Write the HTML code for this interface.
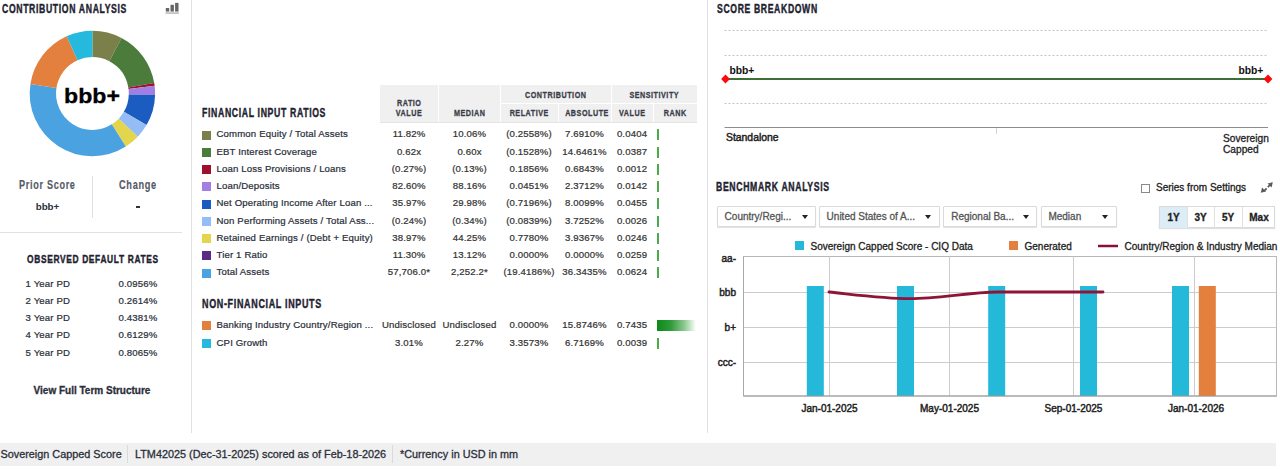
<!DOCTYPE html>
<html><head><meta charset="utf-8">
<style>
html,body{margin:0;padding:0;}
body{width:1280px;height:469px;overflow:hidden;position:relative;background:#fff;font-family:"Liberation Sans",sans-serif;color:#333;}
.t{position:absolute;white-space:nowrap;line-height:10px;font-size:10px;-webkit-text-stroke:0.3px currentColor;}
.hd{position:absolute;white-space:nowrap;font-weight:bold;font-size:12px;line-height:12px;color:#1e2230;transform-origin:0 0;-webkit-text-stroke:0.4px currentColor;}
.vl{position:absolute;width:1px;background:#dfe1e6;}
.sq{position:absolute;width:9px;height:9px;}
.nm{color:#2b2f3a;font-size:9.6px;letter-spacing:0.15px;-webkit-text-stroke:0.22px currentColor;}
.c{text-align:center;color:#333;font-size:9.6px;letter-spacing:0.15px;-webkit-text-stroke:0.22px currentColor;}
.rk{position:absolute;left:657.3px;width:1.4px;height:11px;background:#4caa4c;}
.bigbar{position:absolute;left:657px;width:39px;height:11px;background:linear-gradient(to right,#0a8a18 0%,#2f9a3a 35%,#8cc890 70%,#ffffff 100%);}
.th{position:absolute;background:#f0f0f0;}
.thx{position:absolute;white-space:nowrap;font-weight:bold;font-size:9.6px;line-height:10.6px;color:#3a3d48;text-align:center;letter-spacing:0.7px;text-indent:0.7px;-webkit-text-stroke:0.3px currentColor;transform:scaleX(0.75);transform-origin:50% 0;}
.pd{color:#2b2f3a;font-size:9.6px;letter-spacing:0.15px;-webkit-text-stroke:0.22px currentColor;}
.dd{position:absolute;top:206px;height:19px;border:1px solid #dadada;border-radius:1px;box-shadow:0 1px 1px rgba(0,0,0,0.12);background:#fff;}
.ddt{color:#555;font-size:10px;}
.arr{position:absolute;top:214.5px;width:0;height:0;border-left:3.5px solid transparent;border-right:3.5px solid transparent;border-top:4px solid #222;}
.bg{position:absolute;border:1px solid #dadada;box-shadow:0 1px 1px rgba(0,0,0,0.12);background:#fff;box-sizing:border-box;}
.btn{top:212.5px;text-align:center;font-weight:bold;color:#222;}
.yl{left:700px;width:36px;text-align:right;color:#222;-webkit-text-stroke:0.45px #222;}
.xl{top:403.5px;width:100px;text-align:center;font-size:10px;color:#222;-webkit-text-stroke:0.45px #222;}
.sb{top:448px;font-size:10.85px;line-height:12px;color:#2b2f3a;}
.pdv{color:#2b2f3a;width:56px;text-align:right;font-size:9.6px;letter-spacing:0.15px;-webkit-text-stroke:0.22px currentColor;}
</style></head><body>
<!-- dividers -->
<div class="vl" style="left:191px;top:0;height:433px"></div>
<div class="vl" style="left:706.5px;top:0;height:433px"></div>

<!-- LEFT PANEL -->
<div class="hd" style="left:2px;top:2.5px;letter-spacing:0.9px;transform:scaleX(0.721)">CONTRIBUTION ANALYSIS</div>
<svg style="position:absolute;left:165px;top:2px" width="15" height="13" viewBox="0 0 15 13">
<rect x="0.8" y="6" width="3.4" height="3.6" fill="#666"/><rect x="5.5" y="2.8" width="3.4" height="6.8" fill="#666"/><rect x="10.1" y="0.9" width="3.4" height="8.7" fill="#666"/><rect x="0.5" y="10.6" width="13.5" height="0.9" fill="#8a8a8a"/>
</svg>
<svg style="position:absolute;left:0;top:0" width="190" height="170">
<path d="M92.40 30.80A62.7 62.7 0 0 1 121.53 37.98L109.31 61.27A36.4 36.4 0 0 0 92.40 57.10Z" fill="#7b804a"/>
<path d="M121.53 37.98A62.7 62.7 0 0 1 154.22 83.06L128.29 87.44A36.4 36.4 0 0 0 109.31 61.27Z" fill="#4b7c3c"/>
<path d="M154.22 83.06A62.7 62.7 0 0 1 154.62 85.73L128.52 88.99A36.4 36.4 0 0 0 128.29 87.44Z" fill="#a0102a"/>
<path d="M154.62 85.73A62.7 62.7 0 0 1 155.08 95.05L128.79 94.40A36.4 36.4 0 0 0 128.52 88.99Z" fill="#a07ee4"/>
<path d="M155.08 95.05A62.7 62.7 0 0 1 146.56 125.09L123.84 111.84A36.4 36.4 0 0 0 128.79 94.40Z" fill="#1a5cbf"/>
<path d="M146.56 125.09A62.7 62.7 0 0 1 137.76 136.79L118.73 118.63A36.4 36.4 0 0 0 123.84 111.84Z" fill="#95bdf5"/>
<path d="M137.76 136.79A62.7 62.7 0 0 1 125.78 146.58L111.78 124.31A36.4 36.4 0 0 0 118.73 118.63Z" fill="#e3d54c"/>
<path d="M125.78 146.58A62.7 62.7 0 0 1 30.42 84.05L56.42 88.01A36.4 36.4 0 0 0 111.78 124.31Z" fill="#4aa3e0"/>
<path d="M30.42 84.05A62.7 62.7 0 0 1 66.72 36.30L77.49 60.29A36.4 36.4 0 0 0 56.42 88.01Z" fill="#e3803e"/>
<path d="M66.72 36.30A62.7 62.7 0 0 1 92.40 30.80L92.40 57.10A36.4 36.4 0 0 0 77.49 60.29Z" fill="#25b9de"/>
</svg>
<div class="t" style="left:42px;top:84.7px;width:100px;text-align:center;font-weight:bold;font-size:21px;line-height:22px;color:#000;transform:scaleX(1.1);-webkit-text-stroke:0.3px #000">bbb+</div>

<div class="hd" style="left:19px;top:178.5px;font-size:12px;color:#555a66;letter-spacing:0.9px;-webkit-text-stroke:0.15px currentColor;transform:scaleX(0.759)">Prior Score</div>
<div class="hd" style="left:119px;top:178.5px;font-size:12px;color:#555a66;letter-spacing:0.9px;-webkit-text-stroke:0.15px currentColor;transform:scaleX(0.767)">Change</div>
<div class="t" style="left:20px;width:55px;top:202px;text-align:center;font-weight:bold;font-size:9.8px;color:#2b2f3a;-webkit-text-stroke:0">bbb+</div>
<div style="position:absolute;left:136px;top:206.3px;width:4px;height:1.5px;background:#333"></div>
<div class="vl" style="left:92px;top:176px;height:42px"></div>
<div style="position:absolute;left:0;top:232px;width:182px;height:1px;background:#dfe1e6"></div>

<div class="hd" style="left:26.5px;top:253px;font-size:11.5px;letter-spacing:0.9px;transform:scaleX(0.729)">OBSERVED DEFAULT RATES</div>
<div class="t pd" style="left:25.5px;top:279.1px">1 Year PD</div><div class="t pdv" style="left:101.5px;top:279.1px">0.0956%</div>
<div class="t pd" style="left:25.5px;top:296.20000000000005px">2 Year PD</div><div class="t pdv" style="left:101.5px;top:296.20000000000005px">0.2614%</div>
<div class="t pd" style="left:25.5px;top:313.3px">3 Year PD</div><div class="t pdv" style="left:101.5px;top:313.3px">0.4381%</div>
<div class="t pd" style="left:25.5px;top:330.40000000000003px">4 Year PD</div><div class="t pdv" style="left:101.5px;top:330.40000000000003px">0.6129%</div>
<div class="t pd" style="left:25.5px;top:347.5px">5 Year PD</div><div class="t pdv" style="left:101.5px;top:347.5px">0.8065%</div>
<div class="t" style="left:0px;width:184px;top:386px;text-align:center;font-weight:bold;font-size:10px;color:#2b2f3a">View Full Term Structure</div>

<!-- MIDDLE PANEL -->
<div class="hd" style="left:202px;top:107px;letter-spacing:0.9px;transform:scaleX(0.724)">FINANCIAL INPUT RATIOS</div>
<div class="th" style="left:380px;top:85px;width:317px;height:37px"></div>
<div style="position:absolute;left:438px;top:85px;width:1px;height:37px;background:#fff"></div>
<div style="position:absolute;left:499.5px;top:85px;width:1px;height:37px;background:#fff"></div>
<div style="position:absolute;left:558px;top:103px;width:1px;height:19px;background:#fff"></div>
<div style="position:absolute;left:611px;top:85px;width:1px;height:37px;background:#fff"></div>
<div style="position:absolute;left:653px;top:103px;width:1px;height:19px;background:#fff"></div>
<div style="position:absolute;left:500px;top:103px;width:197px;height:1px;background:#fff"></div>
<div style="position:absolute;left:380px;top:122px;width:317px;height:1px;background:#e4e4e4"></div>
<div class="thx" style="left:380px;width:58px;top:97.5px">RATIO<br>VALUE</div>

<div class="thx" style="left:439px;width:61px;top:108.2px">MEDIAN</div>
<div class="thx" style="left:500px;width:111px;top:89.7px">CONTRIBUTION</div>
<div class="thx" style="left:611px;width:86px;top:89.7px">SENSITIVITY</div>
<div class="thx" style="left:500px;width:58px;top:108.2px">RELATIVE</div>
<div class="thx" style="left:558px;width:53px;top:108.2px">ABSOLUTE</div>
<div class="thx" style="left:611px;width:42px;top:108.2px">VALUE</div>
<div class="thx" style="left:653px;width:44px;top:108.2px">RANK</div>
<div class="sq" style="left:202px;top:130.6px;background:#7b804a"></div>
<div class="t nm" style="left:216.5px;top:129.4px">Common Equity / Total Assets</div>
<div class="t c" style="left:380px;width:58px;top:129.4px">11.82%</div>
<div class="t c" style="left:439px;width:61px;top:129.4px">10.06%</div>
<div class="t c" style="left:500px;width:58px;top:129.4px">(0.2558%)</div>
<div class="t c" style="left:558px;width:53px;top:129.4px">7.6910%</div>
<div class="t c" style="left:611px;width:42px;top:129.4px">0.0404</div>
<div class="rk" style="top:129.4px"></div>
<div class="sq" style="left:202px;top:147.84px;background:#4b7c3c"></div>
<div class="t nm" style="left:216.5px;top:146.64000000000001px">EBT Interest Coverage</div>
<div class="t c" style="left:380px;width:58px;top:146.64000000000001px">0.62x</div>
<div class="t c" style="left:439px;width:61px;top:146.64000000000001px">0.60x</div>
<div class="t c" style="left:500px;width:58px;top:146.64000000000001px">(0.1528%)</div>
<div class="t c" style="left:558px;width:53px;top:146.64000000000001px">14.6461%</div>
<div class="t c" style="left:611px;width:42px;top:146.64000000000001px">0.0387</div>
<div class="rk" style="top:146.64000000000001px"></div>
<div class="sq" style="left:202px;top:165.07999999999998px;background:#a0102a"></div>
<div class="t nm" style="left:216.5px;top:163.88px">Loan Loss Provisions / Loans</div>
<div class="t c" style="left:380px;width:58px;top:163.88px">(0.27%)</div>
<div class="t c" style="left:439px;width:61px;top:163.88px">(0.13%)</div>
<div class="t c" style="left:500px;width:58px;top:163.88px">0.1856%</div>
<div class="t c" style="left:558px;width:53px;top:163.88px">0.6843%</div>
<div class="t c" style="left:611px;width:42px;top:163.88px">0.0012</div>
<div class="rk" style="top:163.88px"></div>
<div class="sq" style="left:202px;top:182.32px;background:#a07ee4"></div>
<div class="t nm" style="left:216.5px;top:181.12px">Loan/Deposits</div>
<div class="t c" style="left:380px;width:58px;top:181.12px">82.60%</div>
<div class="t c" style="left:439px;width:61px;top:181.12px">88.16%</div>
<div class="t c" style="left:500px;width:58px;top:181.12px">0.0451%</div>
<div class="t c" style="left:558px;width:53px;top:181.12px">2.3712%</div>
<div class="t c" style="left:611px;width:42px;top:181.12px">0.0142</div>
<div class="rk" style="top:181.12px"></div>
<div class="sq" style="left:202px;top:199.56px;background:#1a5cbf"></div>
<div class="t nm" style="left:216.5px;top:198.36px">Net Operating Income After Loan ...</div>
<div class="t c" style="left:380px;width:58px;top:198.36px">35.97%</div>
<div class="t c" style="left:439px;width:61px;top:198.36px">29.98%</div>
<div class="t c" style="left:500px;width:58px;top:198.36px">(0.7196%)</div>
<div class="t c" style="left:558px;width:53px;top:198.36px">8.0099%</div>
<div class="t c" style="left:611px;width:42px;top:198.36px">0.0455</div>
<div class="rk" style="top:198.36px"></div>
<div class="sq" style="left:202px;top:216.79999999999998px;background:#95bdf5"></div>
<div class="t nm" style="left:216.5px;top:215.6px">Non Performing Assets / Total Ass...</div>
<div class="t c" style="left:380px;width:58px;top:215.6px">(0.24%)</div>
<div class="t c" style="left:439px;width:61px;top:215.6px">(0.34%)</div>
<div class="t c" style="left:500px;width:58px;top:215.6px">(0.0839%)</div>
<div class="t c" style="left:558px;width:53px;top:215.6px">3.7252%</div>
<div class="t c" style="left:611px;width:42px;top:215.6px">0.0026</div>
<div class="rk" style="top:215.6px"></div>
<div class="sq" style="left:202px;top:234.04px;background:#e3d54c"></div>
<div class="t nm" style="left:216.5px;top:232.84px">Retained Earnings / (Debt + Equity)</div>
<div class="t c" style="left:380px;width:58px;top:232.84px">38.97%</div>
<div class="t c" style="left:439px;width:61px;top:232.84px">44.25%</div>
<div class="t c" style="left:500px;width:58px;top:232.84px">0.7780%</div>
<div class="t c" style="left:558px;width:53px;top:232.84px">3.9367%</div>
<div class="t c" style="left:611px;width:42px;top:232.84px">0.0246</div>
<div class="rk" style="top:232.84px"></div>
<div class="sq" style="left:202px;top:251.27999999999997px;background:#5b2c83"></div>
<div class="t nm" style="left:216.5px;top:250.07999999999998px">Tier 1 Ratio</div>
<div class="t c" style="left:380px;width:58px;top:250.07999999999998px">11.30%</div>
<div class="t c" style="left:439px;width:61px;top:250.07999999999998px">13.12%</div>
<div class="t c" style="left:500px;width:58px;top:250.07999999999998px">0.0000%</div>
<div class="t c" style="left:558px;width:53px;top:250.07999999999998px">0.0000%</div>
<div class="t c" style="left:611px;width:42px;top:250.07999999999998px">0.0259</div>
<div class="rk" style="top:250.07999999999998px"></div>
<div class="sq" style="left:202px;top:268.52px;background:#4aa3e0"></div>
<div class="t nm" style="left:216.5px;top:267.32px">Total Assets</div>
<div class="t c" style="left:380px;width:58px;top:267.32px">57,706.0*</div>
<div class="t c" style="left:439px;width:61px;top:267.32px">2,252.2*</div>
<div class="t c" style="left:500px;width:58px;top:267.32px">(19.4186%)</div>
<div class="t c" style="left:558px;width:53px;top:267.32px">36.3435%</div>
<div class="t c" style="left:611px;width:42px;top:267.32px">0.0624</div>
<div class="rk" style="top:267.32px"></div>
<div class="sq" style="left:202px;top:321.09999999999997px;background:#e3803e"></div>
<div class="t nm" style="left:216.5px;top:319.9px">Banking Industry Country/Region ...</div>
<div class="t c" style="left:380px;width:58px;top:319.9px">Undisclosed</div>
<div class="t c" style="left:439px;width:61px;top:319.9px">Undisclosed</div>
<div class="t c" style="left:500px;width:58px;top:319.9px">0.0000%</div>
<div class="t c" style="left:558px;width:53px;top:319.9px">15.8746%</div>
<div class="t c" style="left:611px;width:42px;top:319.9px">0.7435</div>
<div class="bigbar" style="top:319.9px"></div>
<div class="sq" style="left:202px;top:338.99999999999994px;background:#25b9de"></div>
<div class="t nm" style="left:216.5px;top:337.79999999999995px">CPI Growth</div>
<div class="t c" style="left:380px;width:58px;top:337.79999999999995px">3.01%</div>
<div class="t c" style="left:439px;width:61px;top:337.79999999999995px">2.27%</div>
<div class="t c" style="left:500px;width:58px;top:337.79999999999995px">3.3573%</div>
<div class="t c" style="left:558px;width:53px;top:337.79999999999995px">6.7169%</div>
<div class="t c" style="left:611px;width:42px;top:337.79999999999995px">0.0039</div>
<div class="rk" style="top:337.79999999999995px"></div>
<div class="hd" style="left:202px;top:298px;letter-spacing:0.9px;transform:scaleX(0.7475)">NON-FINANCIAL INPUTS</div>

<div class="hd" style="left:716.5px;top:3px;letter-spacing:0.9px;transform:scaleX(0.719)">SCORE BREAKDOWN</div>
<svg style="position:absolute;left:0;top:0" width="1280" height="160">
<line x1="724.5" y1="30.5" x2="1268" y2="30.5" stroke="#c4c4c4" stroke-width="1" stroke-dasharray="2 2"/><line x1="724.5" y1="55.5" x2="1268" y2="55.5" stroke="#c4c4c4" stroke-width="1" stroke-dasharray="2 2"/><line x1="724.5" y1="103.5" x2="1268" y2="103.5" stroke="#c4c4c4" stroke-width="1" stroke-dasharray="2 2"/>
<line x1="725" y1="79" x2="1268" y2="79" stroke="#3e6e37" stroke-width="2"/>
<line x1="724.5" y1="127.5" x2="1268" y2="127.5" stroke="#8c8c8c" stroke-width="1"/>
<line x1="996.5" y1="128" x2="996.5" y2="134" stroke="#d0d6e0" stroke-width="1"/>
<path d="M725.5 74.6L729.9 79L725.5 83.4L721.1 79Z" fill="#fa0a0a"/><path d="M1268 74.6L1272.4 79L1268 83.4L1263.6 79Z" fill="#fa0a0a"/>
</svg>
<div class="t" style="left:729.5px;top:66px;font-weight:bold;font-size:10.3px;color:#111;-webkit-text-stroke:0">bbb+</div>
<div class="t" style="left:1238.5px;top:66px;font-weight:bold;font-size:10.3px;color:#111;-webkit-text-stroke:0">bbb+</div>
<div class="t" style="left:726px;top:133px;font-size:10.4px;color:#222;-webkit-text-stroke:0.45px #222">Standalone</div>
<div class="t" style="left:1223px;top:132.5px;color:#222;line-height:11.5px;font-size:10.2px">Sovereign<br>Capped</div>

<div class="hd" style="left:716.3px;top:181.3px;letter-spacing:0.9px;transform:scaleX(0.7226)">BENCHMARK ANALYSIS</div>
<div style="position:absolute;left:1141px;top:183.5px;width:7px;height:7px;border:1px solid #888;background:#fff"></div>
<div class="t" style="left:1156px;top:183px;color:#222">Series from Settings</div>
<svg style="position:absolute;left:1256px;top:176px" width="20" height="20" viewBox="0 0 20 20">
<path d="M16.8 6.2 L11.6 7.4 L15.6 11.4 Z M4.8 16.8 L6 11.6 L10 15.6 Z" fill="#5a5a5a"/>
<path d="M14.2 8.8 L11.8 11.2 M10.6 12.4 L8.2 14.8" stroke="#5a5a5a" stroke-width="1.8"/>
</svg>
<div class="dd" style="left:717px;width:96.5px"></div><div class="t ddt" style="left:724.6px;top:211.5px">Country/Regi...</div><div class="arr" style="left:801.5px"></div><div class="dd" style="left:819px;width:118.5px"></div><div class="t ddt" style="left:826.6px;top:211.5px">United States of A...</div><div class="arr" style="left:925.0px"></div><div class="dd" style="left:943.3px;width:92.20000000000005px"></div><div class="t ddt" style="left:951.2px;top:211.5px">Regional Ba...</div><div class="arr" style="left:1022.7px"></div><div class="dd" style="left:1040.5px;width:74.0px"></div><div class="t ddt" style="left:1048.4px;top:211.5px">Median</div><div class="arr" style="left:1102.3px"></div>
<div class="bg" style="left:1159px;top:206px;width:116px;height:22px"></div>
<div style="position:absolute;left:1160px;top:207px;width:27px;height:21px;background:#dcedf8"></div>
<div style="position:absolute;left:1187px;top:207px;width:1px;height:21px;background:#e0e0e0"></div>
<div style="position:absolute;left:1214px;top:207px;width:1px;height:21px;background:#e0e0e0"></div>
<div style="position:absolute;left:1241.5px;top:207px;width:1px;height:21px;background:#e0e0e0"></div>
<div class="t btn" style="left:1160px;width:27px">1Y</div>
<div class="t btn" style="left:1187px;width:27px">3Y</div>
<div class="t btn" style="left:1214px;width:28px">5Y</div>
<div class="t btn" style="left:1242px;width:34px">Max</div>

<svg style="position:absolute;left:0;top:0" width="1280" height="420">
<rect x="743.5" y="256.5" width="533.0" height="139.5" fill="none" stroke="#b8b8b8" stroke-width="1"/>
<line x1="743.5" y1="292.5" x2="1276.5" y2="292.5" stroke="#cccccc" stroke-width="1"/><line x1="743.5" y1="327.5" x2="1276.5" y2="327.5" stroke="#cccccc" stroke-width="1"/><line x1="743.5" y1="362.5" x2="1276.5" y2="362.5" stroke="#cccccc" stroke-width="1"/><line x1="829.5" y1="256.5" x2="829.5" y2="396" stroke="#cccccc" stroke-width="1"/><line x1="949.5" y1="256.5" x2="949.5" y2="396" stroke="#cccccc" stroke-width="1"/><line x1="1073.5" y1="256.5" x2="1073.5" y2="396" stroke="#cccccc" stroke-width="1"/><line x1="1194.5" y1="256.5" x2="1194.5" y2="396" stroke="#cccccc" stroke-width="1"/>
<rect x="806.8" y="286" width="17" height="110" fill="#25b9d9"/><rect x="897" y="286" width="17" height="110" fill="#25b9d9"/><rect x="988.2" y="286" width="17" height="110" fill="#25b9d9"/><rect x="1080" y="286" width="17" height="110" fill="#25b9d9"/><rect x="1172" y="286" width="17" height="110" fill="#25b9d9"/><rect x="1198.8" y="286" width="17" height="110" fill="#e3803e"/>
<line x1="743.5" y1="396" x2="1276.5" y2="396" stroke="#9a9a9a" stroke-width="1.2"/>
<line x1="743.5" y1="256.5" x2="743.5" y2="396" stroke="#a8a8a8" stroke-width="1"/>
<path d="M829 292 C 858 295, 885 298.6, 910 298.6 C 940 298.6, 968 292.2, 998 292 L 1103 292" fill="none" stroke="#8e1438" stroke-width="2.8" stroke-linecap="round"/>
<rect x="795" y="241" width="9" height="9" fill="#25b9d9"/>
<rect x="1009" y="241" width="9" height="9" fill="#e3803e"/>
<line x1="1098" y1="246" x2="1118" y2="246" stroke="#8c0f35" stroke-width="2.5"/>
</svg>
<div class="t" style="left:810.5px;top:241.5px;color:#222">Sovereign Capped Score - CIQ Data</div>
<div class="t" style="left:1024.5px;top:241.5px;color:#222">Generated</div>
<div class="t" style="left:1124.5px;top:241.5px;color:#222">Country/Region &amp; Industry Median</div>
<div class="t yl" style="top:253.5px">aa-</div>
<div class="t yl" style="top:288px">bbb</div>
<div class="t yl" style="top:322.5px">b+</div>
<div class="t yl" style="top:357.5px">ccc-</div>
<div class="t xl" style="left:779.5px">Jan-01-2025</div>
<div class="t xl" style="left:899.5px">May-01-2025</div>
<div class="t xl" style="left:1023.5px">Sep-01-2025</div>
<div class="t xl" style="left:1146px">Jan-01-2026</div>

<!-- status bar -->
<div style="position:absolute;left:0;top:443px;width:1276px;height:23px;background:#f0f0f0"></div>
<div style="position:absolute;left:127px;top:445px;width:1px;height:18px;background:#dadada"></div>
<div style="position:absolute;left:392px;top:445px;width:1px;height:18px;background:#dadada"></div>
<div class="t sb" style="left:0.5px">Sovereign Capped Score</div>
<div class="t sb" style="left:135px">LTM42025 (Dec-31-2025) scored as of Feb-18-2026</div>
<div class="t sb" style="left:400px">*Currency in USD in mm</div>

</body></html>
